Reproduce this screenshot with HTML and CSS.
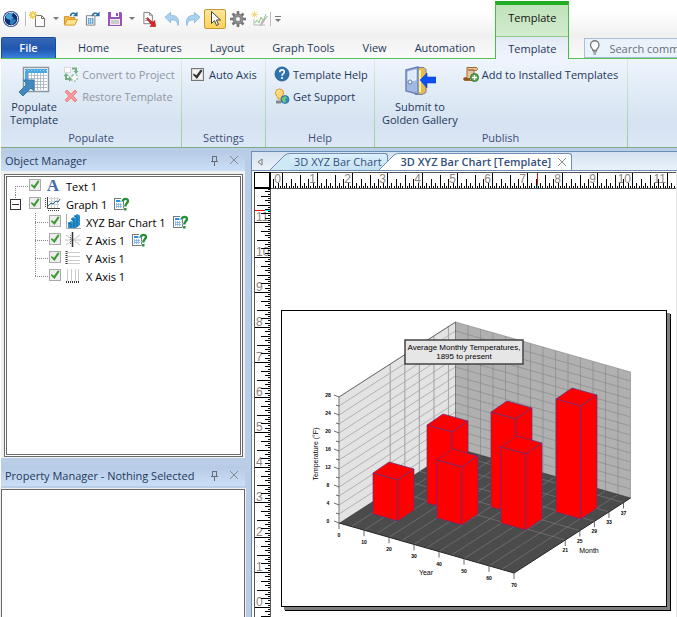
FILE: index.html
```html
<!DOCTYPE html>
<html lang="en">
<head>
<meta charset="utf-8">
<title>3D XYZ Bar Chart [Template]</title>
<link rel="stylesheet" href="styles.css">
</head>
<body>
<svg class="defs" aria-hidden="true">
  <symbol id="table-help" viewBox="0 0 17 14">
    <rect x="1.5" y="1.5" width="9" height="11" fill="#fff" stroke="#777"/>
    <path d="M3 3h6v2H3z" fill="#2a93dc"/>
    <path d="M3.500 6v5M5.500 6v5M7.500 6v5M3 7.500h6M3 9.500h6" stroke="#7ab0dc" stroke-width=".8" fill="none"/>
    <path d="M9.200 4.500C9 .5 15.500 .5 15.300 4.200C15.200 6.500 12.500 6.500 12.500 9.300M12.500 11v2.500" fill="none" stroke="#fff" stroke-width="4"/>
    <path d="M9.800 4.500C9.500 1 15.300 1 15 4.200C14.800 6.300 12.300 6.500 12.300 9.500M12.300 11v2.500" fill="none" stroke="#239036" stroke-width="2.400"/>
  </symbol>
  <symbol id="pin" viewBox="0 0 9 11">
    <path d="M2.500 1v5.500M6.500 1v5.500M2 1.500h5M1 6.500h7M4.500 7v4" stroke="#666c78" fill="none"/>
  </symbol>
  <symbol id="cross" viewBox="0 0 10 10">
    <path d="M1 1l8 8M9 1l-8 8" stroke="#858a92" fill="none"/>
  </symbol>
</svg>
<header class="topbar">
  <div class="quick" role="toolbar" aria-label="Quick access">
    <svg class="globe" viewBox="0 0 18 18"><circle cx="9" cy="9" r="8" fill="#1b3577"/><circle cx="9" cy="9" r="6.800" fill="#102b70" stroke="#e3edf7" stroke-width="1"/><path d="M3.500 7C5 3 9 2.500 11 3.500L9.500 6 12 8 9 10 5 9z" fill="#43a5d9"/><path d="M8 10l5-1 1 2-4 4-2-1z" fill="#2880bf"/></svg>
    <i class="bar"></i>
    <button class="tool new" aria-label="New"><svg viewBox="0 0 18 16"><path d="M6.500 4.500h6l3 3v8h-9z" fill="#fff" stroke="#777"/><path d="M12.500 4.500v3h3" fill="none" stroke="#777"/><path d="M4 0v8M0 4h8M1 1l6 6M7 1L1 7" stroke="#f0bf31" stroke-width="1.300"/><circle cx="4" cy="4" r="1.500" fill="#fff6b8"/></svg></button>
    <i class="caret"></i>
    <button class="tool open" aria-label="Open"><svg viewBox="0 0 17 16"><path d="M1.500 14V5.500h5l1 1h5V9" fill="#f5bd42" stroke="#c88918"/><path d="M1.500 14.500L4.500 8.500h11l-3 6z" fill="#ffe18b" stroke="#d79a27"/><path d="M8 5C8 1.500 12 1 14 3" fill="none" stroke="#286f9f" stroke-width="1.600"/><path d="M15.500 0v5h-5z" fill="#286f9f"/></svg></button>
    <button class="tool book" aria-label="Open table"><svg viewBox="0 0 17 16"><path d="M1.500 4.500h9v10h-9z" fill="#fff" stroke="#777"/><path d="M3 7h6v6H3z" fill="#3c8cc8"/><path d="M3 9h6M3 11h6M5 7v6M7 7v6" stroke="#d9efff" stroke-width=".7"/><path d="M8 5C8 1.500 12 1 14 3" fill="none" stroke="#286f9f" stroke-width="1.600"/><path d="M15.500 0v5h-5z" fill="#286f9f"/></svg></button>
    <button class="tool save" aria-label="Save"><svg viewBox="0 0 16 16"><path d="M1 1h13l1 1v13H1z" fill="#9455b4"/><path d="M4 1h8v5H4z" fill="#fff"/><path d="M9 2h2v3H9z" fill="#9455b4"/><path d="M3 8h10v6H3z" fill="#eee"/><path d="M4 10h8M4 12h8" stroke="#aaa"/></svg></button>
    <i class="caret wide"></i>
    <button class="tool export" aria-label="Export"><svg viewBox="0 0 16 17"><path d="M1.500 1.500h6l3 3v9h-9z" fill="#fff" stroke="#777"/><path d="M7.500 1.500v3h3M3 8h4M3 10h3" fill="none" stroke="#888"/><path d="M5 7l6 5 2-2 1 6.500H8l1.500-2L5 9z" fill="#df2525" stroke="#9b1515" stroke-width=".6"/></svg></button>
    <button class="tool undo" aria-label="Undo"><svg viewBox="0 0 17 16"><path d="M1 6l6-5v3c6 0 10 3 8 11-1-6-4-6-8-6v3z" fill="#a9d2ee" stroke="#7fb3d8" stroke-width=".8"/></svg></button>
    <button class="tool redo" aria-label="Redo"><svg viewBox="0 0 17 16"><path d="M16 6l-6-5v3C4 4 0 7 2 15c1-6 4-6 8-6v3z" fill="#a9d2ee" stroke="#7fb3d8" stroke-width=".8"/></svg></button>
    <button class="tool pointer" aria-label="Select"><svg viewBox="0 0 20 19"><path d="M6.500 2.500v12l3-3 2 5 2-1-2-4.500h4z" fill="#fff" stroke="#414141"/></svg></button>
    <button class="tool gear" aria-label="Options"><svg viewBox="0 0 16 16"><g stroke="#777" stroke-width="2.600"><path d="M8 0v16M0 8h16M2.500 2.500l11 11M13.500 2.500l-11 11"/></g><circle cx="8" cy="8" r="5" fill="#999" stroke="#777"/><circle cx="8" cy="8" r="3" fill="#ccc" stroke="#777"/><circle cx="8" cy="8" r="1.500" fill="#fff"/></svg></button>
    <button class="tool wizard" aria-label="Graph wizard"><svg viewBox="0 0 18 16"><path d="M3 14h11M3 14V8" stroke="#bbb" fill="none"/><path d="M4 12l2-3 2 3 2-6 2 4 3-7" stroke="#8ccc85" fill="none"/><path d="M16.500 5l-4 6-3 4 1-4z" fill="#c7a8a5" stroke="#aaa" stroke-width=".6"/><path d="M3.500 0v7M0 3.500h7M1 1l5 5M6 1L1 6" stroke="#f2dc86"/></svg></button>
    <i class="bar"></i>
    <svg class="more" viewBox="0 0 6 8"><path d="M0 1.500h6" stroke="#777"/><path d="M0 4h6L3 7z" fill="#777"/></svg>
  </div>
  <nav class="tabs">
    <button class="tab file">File</button>
    <button class="tab">Home</button>
    <button class="tab">Features</button>
    <button class="tab">Layout</button>
    <button class="tab">Graph Tools</button>
    <button class="tab">View</button>
    <button class="tab">Automation</button>
    <div class="context"><span class="context-head">Template</span><button class="tab active">Template</button></div>
    <label class="search"><svg viewBox="0 0 12 16"><path d="M4 10.500C4 8.500 1.500 8 1.500 5a4.200 4.200 0 018.500 0c0 3-2.500 3.500-2.500 5.500z" fill="#fff" stroke="#777" stroke-width="1.300"/><path d="M4 12h3.500M4.500 14h2.500" stroke="#666"/></svg><input type="text" aria-label="Search commands" placeholder="Search commands..."></label>
  </nav>
</header>
<section class="ribbon" aria-label="Template commands">
  <div class="group populate">
    <div class="commands">
      <button class="large"><svg viewBox="0 0 32 32"><path d="M5.500 2.500h25v24h-25z" fill="#fff" stroke="#8c969f" stroke-width="1.500"/><path d="M7 4h22v4H7zM7 8h3v17H7z" fill="#4aa8e3"/><path d="M10 10.500h19M10 13.500h19M10 16.500h19M10 19.500h19M10 22.500h19M10.500 8v17M13.500 8v17M16.500 8v17M19.500 8v17M22.500 8v17M25.500 8v17" stroke="#a7b0c0" stroke-width=".8"/><path d="M7 5.500h22" stroke="#9ad8ff" stroke-dasharray="1 2"/><path d="M16 15v11l-3-3-8 8-4-4 8-8-4-4z" fill="#4489bd" stroke="#337bad"/></svg><span>Populate<br>Template</span></button>
      <div class="stack">
        <button class="small" disabled><svg viewBox="0 0 16 16"><path d="M1.500 1.500h6v5h-6z" fill="#fff" stroke="#bbb" stroke-dasharray="1 1"/><path d="M9 9h5v6H9z" fill="#f8faf8" stroke="#78ad82" stroke-dasharray="2 2"/><path d="M9 2.500h4v4M3 9v4h4" fill="none" stroke="#78ad82" stroke-width="2"/><path d="M10.500 5h5L13 8zM.5 10H6L3 7zM6 10v6l3-3z" fill="#78ad82"/></svg><span>Convert to Project</span></button>
        <button class="small" disabled><svg viewBox="0 0 16 16"><path d="M4 2l4 4 4-4 2 2-4 4 4 4-2 2-4-4-4 4-2-2 4-4-4-4z" fill="#f59a9b" stroke="#f08588"/></svg><span>Restore Template</span></button>
      </div>
    </div>
    <h2>Populate</h2>
  </div>
  <div class="group settings">
    <div class="commands"><label class="small"><input class="check" type="checkbox" checked><span>Auto Axis</span></label></div>
    <h2>Settings</h2>
  </div>
  <div class="group help">
    <div class="commands"><div class="stack">
      <button class="small"><svg viewBox="0 0 16 16"><circle cx="8" cy="8" r="7" fill="#2d73ad" stroke="#1d5788" stroke-width=".8"/><path d="M5.700 6.200C5.800 3 10.500 3.200 10.300 6C10.200 7.500 8 7.700 8 9.700M8 11v2" stroke="#fff" stroke-width="1.600" fill="none"/></svg><span>Template Help</span></button>
      <button class="small"><svg viewBox="0 0 16 16"><path d="M4 11C4 8 1.500 8 1.500 5a4 4 0 018 0c0 3-2.500 3-2.500 6z" fill="#ffd574" stroke="#d99a29"/><path d="M3 5.500C3 3 4.500 2.500 6 2.500" stroke="#fff3bd" fill="none"/><path d="M2 12.500h6l-1 3H2z" fill="#888"/><circle cx="11" cy="11.500" r="4" fill="#2c88cf" stroke="#286b9c" stroke-width=".7"/><path d="M8 10l3-2 2 2-2 1 1 3-2 1-2-3z" fill="#74c96f"/></svg><span>Get Support</span></button>
    </div></div>
    <h2>Help</h2>
  </div>
  <div class="group publish">
    <div class="commands">
      <button class="large"><svg viewBox="0 0 32 32"><path d="M11 2.500h9l2 2v23l-4 2h-7z" fill="#e8bc4a" stroke="#777caa"/><path d="M16 5v22M14 5v22" stroke="#fff0a0" stroke-width="2"/><path d="M2 5l12-3v27L2 26z" fill="#9fb9e1" stroke="#6f83b8" stroke-width="1.500"/><path d="M4 7l8-2v10l-8 1z" fill="#dce9f9" stroke="#fff" stroke-width=".7"/><circle cx="6" cy="17" r="2" fill="#eee" stroke="#677eae"/><path d="M16 15l7-7v4h9v6h-9v5z" fill="#0d4ff0" stroke="#0b42d2" stroke-width=".6"/></svg><span>Submit to<br>Golden Gallery</span></button>
      <div class="stack"><button class="small"><svg viewBox="0 0 16 16"><path d="M4 1.500h9c2 0 2 3 0 3h-2v8c0 2-1 2-2 2H2c-2 0-2-3 0-3h2z" fill="#e9c699" stroke="#a4682c"/><path d="M5 4h6" stroke="#7e4825"/><path d="M1 13h6" stroke="#8e5327" stroke-width="2"/><circle cx="11.500" cy="11.500" r="4" fill="#5ba750" stroke="#347a30"/><path d="M9 11.500h5M11.500 9v5" stroke="#fff" stroke-width="1.300"/></svg><span>Add to Installed Templates</span></button></div>
    </div>
    <h2>Publish</h2>
  </div>
</section>
<main class="workspace">
  <aside class="side">
    <section class="panel objects">
      <header class="panel-head"><h2>Object Manager</h2><button aria-label="Pin"><svg class="pin"><use href="#pin"/></svg></button><button aria-label="Close"><svg class="cross"><use href="#cross"/></svg></button></header>
      <div class="tree-frame">
        <ul class="tree">
          <li class="first"><div class="row"><i class="twig"></i><label><input class="check leaf" type="checkbox" checked><b class="letter" aria-hidden="true">A</b><span>Text 1</span></label></div></li>
          <li><div class="row"><button class="fold" aria-label="Collapse Graph 1"></button><label><input class="check leaf" type="checkbox" checked><svg viewBox="0 0 16 16"><path d="M4 2.500h10M4 5.500h10M4 8.500h10M6.500 1v11M9.500 1v11M12.500 1v11" stroke="#d1d1d1"/><path d="M3 10l3-3 2 1 3-3 2 1 2-3" stroke="#28649b" fill="none"/><path d="M2.500 1v11.500H15" stroke="#444" fill="none"/><path d="M.5 2v10M3 14.500h12" stroke="#444" stroke-dasharray="1 1"/></svg><span>Graph 1</span></label><svg class="mark"><use href="#table-help"/></svg></div>
            <ul>
              <li><div class="row"><i class="twig"></i><label><input class="check leaf" type="checkbox" checked><svg viewBox="0 0 16 16"><path d="M1.500 0v14.500H16" stroke="#aaa" fill="none"/><path d="M3 9l3-2 2 1v6H3zM6 5l2-2 3 1v10H8V8zM9 2l3-2 3 1.500V11l-4 3V4z" fill="#2791cf"/><path d="M3 9l3 1v4M6 5l3 1v8M9 2l3 1v10" stroke="#126698" fill="none"/></svg><span>XYZ Bar Chart 1</span></label><svg class="mark"><use href="#table-help"/></svg></div></li>
              <li><div class="row"><i class="twig"></i><label><input class="check leaf" type="checkbox" checked><svg viewBox="0 0 16 16"><path d="M1 3l14 10M15 3L1 13M0 8h16" stroke="#c4c4c4"/><path d="M7.500 0v15" stroke="#333" stroke-width="1.500"/><path d="M5.500 3v10" stroke="#777" stroke-dasharray="1 1"/></svg><span>Z Axis 1</span></label><svg class="mark"><use href="#table-help"/></svg></div></li>
              <li><div class="row"><i class="twig"></i><label><input class="check leaf" type="checkbox" checked><svg viewBox="0 0 16 16"><path d="M2 2.500h13M2 6.500h13M2 10.500h13M2 13.500h13" stroke="#ccc"/><path d="M1.500 1v14" stroke="#333" stroke-width="2" stroke-dasharray="1 1"/></svg><span>Y Axis 1</span></label></div></li>
              <li class="last"><div class="row"><i class="twig"></i><label><input class="check leaf" type="checkbox" checked><svg viewBox="0 0 16 16"><path d="M2.500 1v12M6.500 1v12M10.500 1v12M13.500 1v12" stroke="#ccc"/><path d="M1 14h14" stroke="#333" stroke-width="2" stroke-dasharray="1 1"/></svg><span>X Axis 1</span></label></div></li>
            </ul>
          </li>
        </ul>
      </div>
    </section>
    <section class="panel properties">
      <header class="panel-head"><h2>Property Manager - Nothing Selected</h2><button aria-label="Pin"><svg class="pin"><use href="#pin"/></svg></button><button aria-label="Close"><svg class="cross"><use href="#cross"/></svg></button></header>
      <div class="property-list"></div>
    </section>
  </aside>
  <section class="document">
    <nav class="doc-tabs">
      <button class="scroll" aria-label="Scroll tabs left"><svg viewBox="0 0 6 8"><path d="M5 1v6L1 4z" fill="#eee" stroke="#777"/></svg></button>
      <button class="doc-tab"><svg viewBox="0 0 20 17"><path d="M0 17L15 2Q17 .5 20 .5V17z" fill="#cfe8f6"/><path d="M0 17L15 2Q17 .5 20 .5" fill="none" stroke="#6e8fb5"/></svg><span>3D XYZ Bar Chart</span></button>
      <div class="doc-tab current"><svg viewBox="0 0 20 17"><path d="M0 17L15 2Q17 .5 20 .5V17z" fill="#fff"/><path d="M0 17L15 2Q17 .5 20 .5" fill="none" stroke="#6e8fb5"/></svg><span>3D XYZ Bar Chart [Template]<button aria-label="Close tab"><svg class="cross"><use href="#cross"/></svg></button></span></div>
    </nav>
    <div class="board">
      <div class="corner"></div>
      <div class="ruler across"><svg id="ruler-x"></svg></div>
      <div class="ruler down"><svg id="ruler-y"></svg></div>
      <div class="canvas">
        <div class="page"><svg id="chart" viewBox="282 311 384 295" role="img" aria-label="Average monthly temperatures"></svg></div>
      </div>
    </div>
  </section>
</main>
<script src="app.js"></script>
</body>
</html>
```
FILE: styles.css
```css
* { box-sizing: border-box; }
body {
  margin: 0;
  height: 100vh;
  display: flex;
  flex-direction: column;
  overflow: hidden;
  background: #fff;
  font: 11px/13px "Open Sans", "Noto Sans", sans-serif;
  color: #1e395b;
}
button { font: inherit; color: inherit; border: 0; padding: 0; background: none; }
h2 { font: inherit; margin: 0; }
ul { list-style: none; margin: 0; padding: 0; }
svg { display: block; flex: none; }
.defs { width: 0; height: 0; position: absolute; }

.topbar {
  flex: none;
  padding-left: 1px;
  background: linear-gradient(#fff 0, #fff 12px, #f0f0f0 36px, #fafafa 58px);
}
.quick { height: 37px; display: flex; align-items: center; padding-left: 1px; }
.globe { width: 18px; height: 18px; }
.bar { width: 1px; height: 14px; background: #bbb; margin: 0 2px 0 5px; }
.tool { height: 20px; display: flex; align-items: center; justify-content: center; width: 20px; margin-right: 2px; }
.tool svg { width: 16px; height: 16px; }
.tool.new svg, .tool.wizard svg { width: 18px; }
.tool.new { margin-right: 1px; }
.tool.save { margin-right: 0; }
.tool.undo, .tool.redo { margin-right: 1px; }
.tool.pointer { width: 22px; background: linear-gradient(#fde59b, #ffd35a); border: 1px solid #c39a3b; border-radius: 2px; }
.tool.pointer svg { width: 20px; height: 19px; }
.tool.wizard { margin-right: 0; }
.tool.wizard + .bar { margin: 0 4px 0 0; }
.caret { border: 3px solid transparent; border-top-color: #777; border-bottom: 0; margin: 0 2px 0 4px; }
.caret.wide { margin-right: 5px; }
.more { width: 6px; height: 8px; }

.tabs { height: 22px; display: flex; border-bottom: 1px solid #55c255; }
.tab { flex: none; padding: 0 14px; height: 21px; }
.tab.file {
  width: 55px;
  margin-right: 8px;
  color: #fff;
  font-weight: 600;
  padding-bottom: 2px;
  border: 1px solid #1c4a9c;
  border-bottom: 0;
  border-radius: 2px 2px 0 0;
  background: linear-gradient(#3767b5, #1f57b0 55%, #3b82dd);
}
.context {
  flex: none;
  margin: -36px 0 -1px 6px;
  border: 1px solid #49b949;
  border-top: 4px solid #22ad22;
  border-bottom: 0;
  display: flex;
  flex-direction: column;
  background: linear-gradient(#bfe3b9, #e2f2df);
  color: #111;
}
.context-head { height: 32px; padding-top: 6px; text-align: center; border-bottom: 1px solid #8ccc8c; }
.context .tab { height: 22px; color: #1e395b; padding: 0 12px; background: linear-gradient(#e4eaf5, #f0f5fd); }
.search {
  flex: 1;
  min-width: 0;
  height: 20px;
  margin: 1px 0 0 15px;
  padding-left: 4px;
  display: flex;
  align-items: center;
  gap: 8px;
  border: 1px solid #a9bedc;
  border-right: 0;
  background: #eaf2fc;
}
.search svg { width: 12px; height: 16px; }
.search input { flex: 1; min-width: 0; border: 0; padding: 0; background: none; font: inherit; }
.search input::placeholder { color: #6a6f76; opacity: 1; }

.ribbon {
  flex: none;
  height: 89px;
  margin-left: 1px;
  display: flex;
  background: linear-gradient(#eff5fd, #e3edf8 30%, #d6e2f1 75%, #dce8f6);
  border-bottom: 1px solid #7ea985;
}
.group {
  flex: none;
  display: flex;
  flex-direction: column;
  justify-content: space-between;
  border-right: 1px solid;
  border-image: linear-gradient(#dfeadf, #94cf94) 1;
  padding: 4px 8px 3px;
}
.group h2 { text-align: center; color: #3e4f76; }
.commands { display: flex; gap: 5px; }
.populate { width: 181px; }
.populate .commands { padding-left: 1px; }
.settings { width: 84px; }
.help { width: 109px; }
.publish { width: 253px; padding-left: 7px; }
.large { display: flex; flex-direction: column; align-items: center; gap: 3px; }
.large svg { width: 32px; height: 32px; margin-top: 2px; }
.large span { white-space: nowrap; }
.stack { display: flex; flex-direction: column; }
.small { height: 22px; display: flex; align-items: center; gap: 3px; white-space: nowrap; }
.small svg { width: 16px; height: 16px; }
.small:disabled { color: #8f969f; }
.settings .small { gap: 5px; }
.check {
  appearance: none;
  flex: none;
  width: 13px;
  height: 13px;
  margin: 0 0 0 1px;
  background: #f4f4f4;
  border: 1px solid #777;
  outline: 1px solid #ddd;
  outline-offset: -2px;
}
.check::before {
  content: "";
  display: block;
  width: 100%;
  height: 100%;
  background: #333;
  clip-path: polygon(15% 45%, 40% 62%, 80% 8%, 95% 20%, 45% 95%, 10% 60%);
}
.check.leaf { width: 12px; height: 12px; margin: 0 4px 3px 0; border-color: #aaa; background: #eee; outline: 0; }
.check.leaf::before { background: #3a9a30; }

.workspace { flex: 1; min-height: 0; display: flex; padding-top: 3px; margin-left: 1px; background: #bacde6; }
.side { flex: none; width: 244px; display: flex; flex-direction: column; gap: 8px; }
.panel { display: flex; flex-direction: column; }
.panel-head { height: 20px; display: flex; align-items: center; padding: 0 6px 2px 4px; background: linear-gradient(#b6c9e5, #cadff7); }
.panel-head h2 { flex: 1; white-space: nowrap; }
.panel-head button + button { margin-left: 10px; }
.pin { width: 9px; height: 11px; }
.cross { width: 10px; height: 10px; }
.objects { flex: 0 1 307px; }
.tree-frame { flex: 1; padding: 3px 2px 1px 3px; background: #f0f0f0; display: flex; }
.tree { flex: 1; padding-left: 3px; background: #fff; border: 3px double #696969; color: #000; }
.properties { flex: 1; }
.property-list { flex: 1; margin-top: 3px; border: 1px solid #696969; border-bottom: 0; background: #fff; outline: 1px solid #f0f0f0; }
.row { height: 18px; display: flex; align-items: center; }
.row label { display: flex; align-items: center; }
.row label svg { width: 16px; height: 16px; margin-right: 5px; }
.mark { width: 17px; height: 14px; margin-left: 6px; }
.letter { width: 16px; margin-right: 5px; text-align: center; font: bold 17px/18px "Liberation Serif", serif; color: #4169ae; }
.twig { width: 13px; height: 1px; margin: 0 1px 0 5px; background: repeating-linear-gradient(90deg, #888 0 1px, transparent 1px 2px); }
.tree ul { margin-left: 20px; }
.tree li { background: repeating-linear-gradient(#888 0 1px, transparent 1px 2px) 5px 0 / 1px 100% no-repeat; }
.tree > li { background-size: 1px 9px; }
.tree > .first { background-position: 5px 9px; }
.tree .last { background-size: 1px 9px; }
.fold { width: 11px; height: 11px; margin-right: 8px; border: 1px solid #333; background: linear-gradient(#333, #333) center / 7px 1px no-repeat #fff; }

.document { flex: 1; min-width: 0; margin-left: 6px; border: 1px solid #6e8fb5; border-right: 0; border-bottom: 0; display: flex; flex-direction: column; background: #fff; }
.doc-tabs { flex: none; height: 19px; display: flex; align-items: flex-end; border-bottom: 1px solid #6e8fb5; background: linear-gradient(#d5e2f2, #eaf1fa); overflow: hidden; }
.scroll { width: 17px; height: 17px; padding-left: 5px; }
.scroll svg { width: 6px; height: 8px; }
.doc-tab { flex: none; display: flex; height: 17px; color: #35507c; white-space: nowrap; margin-left: 1px; }
.doc-tab > svg { width: 20px; height: 17px; }
.doc-tab > span { height: 17px; padding: 0 5px 0 4px; line-height: 16px; border-top: 1px solid #6e8fb5; border-right: 1px solid #6e8fb5; border-radius: 0 3px 0 0; background: linear-gradient(#dcf0fb, #c4e1f3); display: flex; align-items: center; }
.current { font-weight: 600; margin-left: -9px; }
.current > span { background: #fff; padding: 0 4px 0 2px; gap: 6px; }

.board { flex: 1; min-height: 0; display: grid; grid-template-columns: 17px 1fr; grid-template-rows: 17px 1fr; padding: 1px 0 0 2px; border-right: 1px solid #e6e6e6; }
.corner { border: 1px solid #000; border-bottom-width: 2px; border-right-width: 2px; }
.ruler { overflow: hidden; position: relative; }
.ruler svg { position: absolute; width: 100%; height: 100%; }
.across { border-top: 1px solid #555; border-bottom: 1px solid #555; }
.down { border-left: 1px solid #555; border-right: 1px solid #555; }
.ruler text { font: 12px "Liberation Sans", Arial, sans-serif; fill: #8c8480; }
.tick { stroke: #000; fill: none; }
.canvas { overflow: hidden; padding: 121px 10px 0; }
.page { width: 386px; border: 1px solid #000; background: #fff; box-shadow: 3px 3px 0 #808080, 4px 4px 0 #000; }
.page svg { width: 100%; height: auto; }
.page text { font-family: "Liberation Sans", Arial, sans-serif; text-anchor: middle; fill: #000; }
.scale { font-size: 5px; font-weight: bold; }
.axis { font-size: 7px; }
.title { font-size: 8px; }
```
FILE: app.js
```js
const NS = 'http://www.w3.org/2000/svg';

function add(parent, tag, attrs, text) {
  const node = document.createElementNS(NS, tag);
  for (const key in attrs) node.setAttribute(key, attrs[key]);
  if (text !== undefined) node.textContent = text;
  parent.appendChild(node);
  return node;
}

// One inch is UNIT pixels, split into sixteenths.
const UNIT = 35;

function tickLength(i) {
  if (i % 16 === 0) return 15;
  if (i % 8 === 0) return 13;
  if (i % 4 === 0) return 9;
  return i % 2 === 0 ? 5 : 2;
}

const rulerX = document.getElementById('ruler-x');
const rulerY = document.getElementById('ruler-y');

function drawRulers() {
  rulerX.replaceChildren();
  rulerY.replaceChildren();
  const width = rulerX.clientWidth;
  const height = rulerY.clientHeight;

  let path = '';
  for (let i = -4; 11 + i * UNIT / 16 < width; i++) {
    const x = Math.round(11 + i * UNIT / 16) + 0.5;
    path += `M${x} 15v${-tickLength(i)}`;
  }
  for (let n = 0; 10 + n * UNIT < width; n++) {
    add(rulerX, 'text', { x: 10 + n * UNIT, y: 10, 'text-anchor': 'end' }, n);
  }
  add(rulerX, 'path', { d: path, class: 'tick' });
  add(rulerX, 'path', { d: 'M266.5 0v12', stroke: '#f00' });
  add(rulerX, 'path', { d: 'M266.5 12v3', stroke: '#0ff' });

  path = '';
  for (let y = 418, i = 0; y > 0; i++) {
    y = 418 - i * UNIT / 16;
    path += `M15 ${Math.round(y) + 0.5}h${-tickLength(i)}`;
  }
  for (let y = 418, i = 0; y < height; i--) {
    y = 418 - i * UNIT / 16;
    path += `M15 ${Math.round(y) + 0.5}h${-tickLength(i)}`;
  }
  for (let n = 0; n < 12; n++) add(rulerY, 'text', { x: 1, y: 417 - n * UNIT }, n);
  add(rulerY, 'path', { d: path, class: 'tick' });
  add(rulerY, 'path', { d: 'M0 21.5h10', stroke: '#f00' });
  add(rulerY, 'path', { d: 'M10 21.5h5', stroke: '#0ff' });
}
drawRulers();
window.addEventListener('resize', drawRulers);

// Oblique projection: year, month and value, each from 0 to 1.
const chart = document.getElementById('chart');
const at = (year, month, value) => [
  339 + 175 * year + 116.5 * month,
  523 + 50 * year - 75 * month - 126 * value
];
const poly = (points, fill, stroke) =>
  add(chart, 'polygon', { points: points.map(p => p.join(',')).join(' '), fill, stroke: stroke || 'none', 'stroke-width': 0.7 });
const line = (a, b, stroke, width) =>
  add(chart, 'path', { d: `M${a}L${b}`, stroke, 'stroke-width': width || 0.6, fill: 'none' });

poly([at(0, 0, 0), at(0, 1, 0), at(0, 1, 1), at(0, 0, 1)], '#e3e3e3');
poly([at(0, 1, 0), at(1, 1, 0), at(1, 1, 1), at(0, 1, 1)], '#b0b0b0');
poly([at(0, 0, 0), at(1, 0, 0), at(1, 1, 0), at(0, 1, 0)], '#4b4b4b');

const months = [[21, 0.44], [25, 0.565], [29, 0.69], [33, 0.815], [37, 0.94]];
for (let i = 1; i <= 14; i++) {
  const t = i / 14;
  line(at(0, 0, t), at(0, 1, t), '#909090');
  line(at(0, 1, t), at(1, 1, t), '#858585');
  line(at(t, 1, 0), at(t, 1, 1), '#858585');
  line(at(t, 0, 0), at(t, 1, 0), '#808080');
}
for (const [, m] of months) {
  line(at(0, m, 0), at(0, m, 1), '#aaa', 1.2);
  line(at(0, m, 0), at(1, m, 0), '#808080');
}
line(at(0, 0, 1), at(0, 1, 1), '#333');
line(at(0, 1, 0), at(0, 1, 1), '#444');
line(at(0, 0, 0), at(0, 0, 1), '#777', 1);
line(at(0, 0, 0), at(1, 0, 0), '#222', 1);
line(at(1, 0, 0), at(1, 1, 0), '#222', 1);
line(at(0, 1, 0), at(1, 1, 0), '#222');

for (let i = 0; i <= 14; i++) {
  const [x, y] = at(0, 0, i / 14);
  line([x, y], [x - (i % 2 ? 3 : 5), y - (i % 2 ? 1 : 2)], '#444', 0.8);
  if (i % 2 === 0) add(chart, 'text', { x: x - 11, y, class: 'scale' }, i * 2);
}
for (let i = 0; i <= 7; i++) {
  const [x, y] = at(i / 7, 0, 0);
  line([x, y], [x, y + 6], '#444', 0.8);
  add(chart, 'text', { x, y: y + 14, class: 'scale' }, i * 10);
}
for (const [label, m] of months) {
  const [x, y] = at(1, m, 0);
  line([x, y], [x, y + 6], '#444', 0.8);
  add(chart, 'text', { x, y: y + 12, class: 'scale' }, label);
}

// Each bar: left edge x, top y and bottom y, back row first.
const bars = [[427, 425, 503], [491, 412, 507], [556, 399, 512], [373, 473, 514], [437, 460, 518], [501, 447, 523]];
for (const [x, top, bottom] of bars) {
  const front = [x + 25, top + 7], right = [x + 41, top - 4];
  poly([[x, top], [x + 16, top - 11], right, front], '#f00', '#5c3080');
  poly([[x, top], front, [x + 25, bottom + 7], [x, bottom]], '#f00', '#5c3080');
  poly([front, right, [x + 41, bottom - 4], [x + 25, bottom + 7]], '#f00', '#5c3080');
}

add(chart, 'rect', { x: 405, y: 340, width: 118, height: 24, fill: '#e6e6e6', stroke: '#444', 'stroke-width': 1.5 });
add(chart, 'text', { x: 464, y: 350, class: 'title' }, 'Average Monthly Temperatures,');
add(chart, 'text', { x: 464, y: 359, class: 'title' }, '1895 to present');
add(chart, 'text', { x: 426, y: 575, class: 'axis' }, 'Year');
add(chart, 'text', { x: 589, y: 553, class: 'axis' }, 'Month');
add(chart, 'text', { x: 318, y: 454, class: 'axis', transform: 'rotate(-90 318 454)' }, 'Temperature (°F)');
```
